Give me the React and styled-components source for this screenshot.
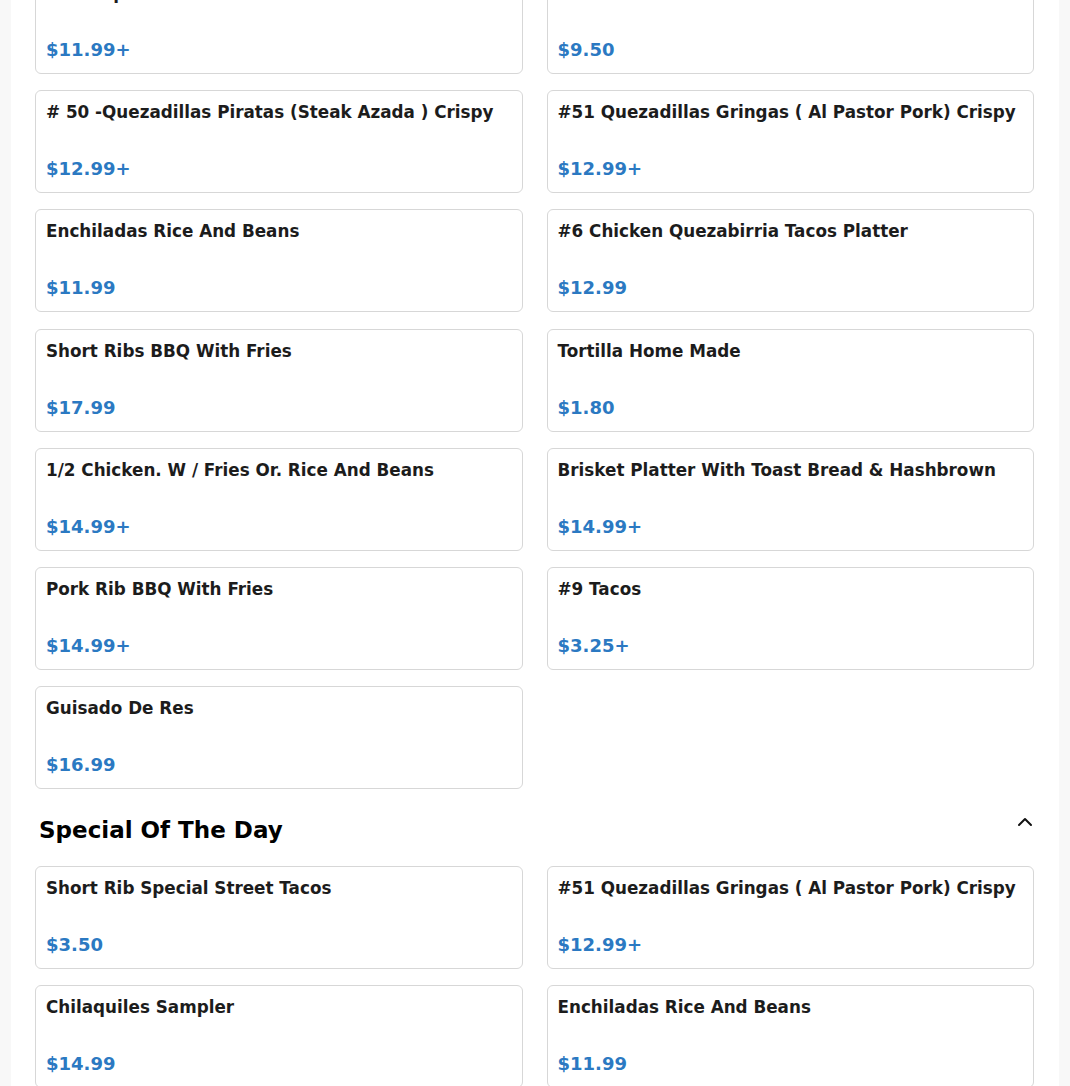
import React from 'react';
import styled, { createGlobalStyle } from 'styled-components';
import { ChevronUp } from 'lucide-react';

const GlobalStyle = createGlobalStyle`
  html, body {
    margin: 0;
    padding: 0;
    background: #f8f8f8;
    font-family: 'DejaVu Sans', 'Liberation Sans', sans-serif;
    overflow: hidden;
  }
`;

// page is shown scrolled a little, so the first row is partly hidden
const Page = styled.div`
  width: 1048px;
  margin: -29px 0 0 11px;
  background: #fff;
  padding: 0 25px 40px 24px;
  box-sizing: border-box;
  min-height: 1200px;
`;

const Grid = styled.div`
  display: grid;
  grid-template-columns: 1fr 1fr;
  column-gap: 24px;
  row-gap: 16.2px;
`;

const Card = styled.div`
  height: 103px;
  box-sizing: border-box;
  border: 1px solid #d7d7d7;
  border-radius: 6px;
  padding: 9px 10px 10px;
  display: flex;
  flex-direction: column;
  justify-content: space-between;
  background: #fff;
`;

const Name = styled.div`
  font-size: 16.8px;
  font-weight: bold;
  line-height: 24px;
  color: #1c1c1c;
  white-space: nowrap;
`;

const Price = styled.div`
  font-size: 18px;
  font-weight: bold;
  line-height: 27px;
  color: #2b79c2;
`;

const SectionHeader = styled.div`
  display: flex;
  justify-content: space-between;
  align-items: flex-start;
  margin: 21px 0 22px;
`;

const SectionTitle = styled.h2`
  margin: 6px 0 0 4px;
  font-size: 23px;
  line-height: 28px;
  font-weight: bold;
  color: #000;
`;

const Toggle = styled.button`
  border: none;
  background: none;
  padding: 0;
  margin-right: -3px;
  width: 24px;
  height: 24px;
  color: #111;
  cursor: pointer;
  display: flex;
`;

const mainItems = [
  ['#14 Supreme Burrito Bowl', '$11.99+'],
  ['Huevos Con Chorizo Plate', '$9.50'],
  ['# 50 -Quezadillas Piratas (Steak Azada ) Crispy', '$12.99+'],
  ['#51 Quezadillas Gringas ( Al Pastor Pork) Crispy', '$12.99+'],
  ['Enchiladas Rice And Beans', '$11.99'],
  ['#6 Chicken Quezabirria Tacos Platter', '$12.99'],
  ['Short Ribs BBQ With Fries', '$17.99'],
  ['Tortilla Home Made', '$1.80'],
  ['1/2 Chicken. W / Fries Or. Rice And Beans', '$14.99+'],
  ['Brisket Platter With Toast Bread & Hashbrown', '$14.99+'],
  ['Pork Rib BBQ With Fries', '$14.99+'],
  ['#9 Tacos', '$3.25+'],
  ['Guisado De Res', '$16.99'],
];

const specialItems = [
  ['Short Rib Special Street Tacos', '$3.50'],
  ['#51 Quezadillas Gringas ( Al Pastor Pork) Crispy', '$12.99+'],
  ['Chilaquiles Sampler', '$14.99'],
  ['Enchiladas Rice And Beans', '$11.99'],
];

const ItemCard = ({ name, price }) => (
  <Card>
    <Name>{name}</Name>
    <Price>{price}</Price>
  </Card>
);

export default function App() {
  return (
    <>
      <GlobalStyle />
      <Page>
        <Grid>
          {mainItems.map(([name, price], i) => (
            <ItemCard key={i} name={name} price={price} />
          ))}
        </Grid>
        <SectionHeader>
          <SectionTitle>Special Of The Day</SectionTitle>
          <Toggle aria-label="Collapse section">
            <ChevronUp size={24} strokeWidth={2} />
          </Toggle>
        </SectionHeader>
        <Grid>
          {specialItems.map(([name, price], i) => (
            <ItemCard key={i} name={name} price={price} />
          ))}
        </Grid>
      </Page>
    </>
  );
}
